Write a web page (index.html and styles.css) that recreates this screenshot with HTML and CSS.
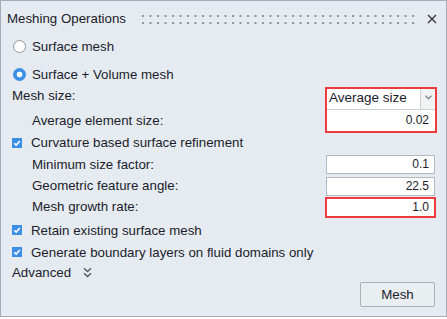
FILE: index.html
```html
<!DOCTYPE html>
<html lang="en">
<head>
  <meta charset="UTF-8" />
  <title>Meshing Operations</title>
  <link rel="stylesheet" href="styles.css">
</head>
<body>

  <div class="panel">
    <div class="head">
      <span class="title">Meshing Operations</span>
      <svg class="grip" height="9">
        <defs>
          <pattern id="dots" width="7.5" height="7" patternUnits="userSpaceOnUse">
            <rect x="0" y="0" width="2" height="2" fill="#8e9399" />
          </pattern>
        </defs>
        <rect x="0" y="0" width="100%" height="9" fill="url(#dots)" />
      </svg>
      <svg class="close" width="10" height="10" viewBox="0 0 10 10">
        <path d="M1 1 L9 9 M9 1 L1 9" stroke="#333" stroke-width="1.3" fill="none" />
      </svg>
    </div>

    <div class="radios">
      <label class="row"><span class="radio"></span>Surface mesh</label>
      <label class="row"><span class="radio on"></span>Surface + Volume mesh</label>
    </div>

    <div class="form">
      <span class="lbl top">Mesh size:</span>
      <div class="hl">
        <div class="select">
          <span>Average size</span>
          <span class="arrow">
            <svg width="7" height="5" viewBox="0 0 7 5"><path d="M0.5 0.8 L3.5 3.8 L6.5 0.8" stroke="#8a8a8a" stroke-width="1.4" fill="none" /></svg>
          </span>
        </div>
        <div class="value">0.02</div>
      </div>
      <span class="lbl sub">Average element size:</span>

      <div class="check full">
        <span class="box"><svg width="10" height="10" viewBox="0 0 10 10"><path d="M2.3 5.2 L4.2 7.1 L7.8 3" stroke="#fff" stroke-width="1.6" fill="none" /></svg></span>
        Curvature based surface refinement
      </div>

      <span class="lbl sub">Minimum size factor:</span>
      <div class="field">0.1</div>
      <span class="lbl sub">Geometric feature angle:</span>
      <div class="field">22.5</div>
      <span class="lbl sub">Mesh growth rate:</span>
      <div class="field marked">1.0</div>
    </div>

    <div class="check">
      <span class="box"><svg width="10" height="10" viewBox="0 0 10 10"><path d="M2.3 5.2 L4.2 7.1 L7.8 3" stroke="#fff" stroke-width="1.6" fill="none" /></svg></span>
      Retain existing surface mesh
    </div>
    <div class="check">
      <span class="box"><svg width="10" height="10" viewBox="0 0 10 10"><path d="M2.3 5.2 L4.2 7.1 L7.8 3" stroke="#fff" stroke-width="1.6" fill="none" /></svg></span>
      Generate boundary layers on fluid domains only
    </div>

    <div class="advanced">
      Advanced
      <svg width="9" height="11" viewBox="0 0 9 11">
        <path d="M1 1.2 L4.5 4.5 L8 1.2 M1 6.2 L4.5 9.5 L8 6.2" stroke="#555" stroke-width="1.3" fill="none" />
      </svg>
    </div>

    <div class="actions">
      <button class="btn">Mesh</button>
    </div>
  </div>

</body>
</html>
```

FILE: styles.css
```css
body {
  margin: 0;
  background: #fff;
  font-family: "Liberation Sans", Arial, sans-serif;
  font-size: 13.3px;
  color: #1c1c2c;
}
.panel {
  width: 447px;
  height: 317px;
  box-sizing: border-box;
  border: 1px solid #a5acb3;
  background: #e5ebf0;
  padding: 0 11px 0 11px;
}
.head {
  height: 36px;
  display: flex;
  align-items: center;
  margin-left: -5px;
  margin-right: -2px;
}
.title {
  line-height: 16px;
}
.grip {
  flex: 1;
  margin: 0 9px 0 16px;
}
.close {
  flex: none;
}
.radios {
  display: flex;
  flex-direction: column;
  gap: 10px;
}
.row {
  height: 18px;
  display: flex;
  align-items: center;
  gap: 6px;
  margin-left: 1px;
}
.radio {
  width: 13px;
  height: 13px;
  box-sizing: border-box;
  border-radius: 50%;
  border: 1px solid #8f959b;
  background: #fff;
}
.radio.on {
  border: none;
  background: radial-gradient(circle, #fff 2.6px, #3b8fe6 3.2px);
}
.form {
  margin-top: 6px;
  display: grid;
  grid-template-columns: 1fr 109px;
  grid-template-rows: 21px 21px 23px 21px 22px 20px;
  align-items: center;
}
.lbl {
  line-height: 16px;
}
.lbl.top {
  align-self: start;
  margin-top: -1px;
}
.sub {
  padding-left: 20px;
}
.hl {
  grid-row: 1 / span 2;
  grid-column: 2;
  align-self: stretch;
  margin-left: 1px;
  outline: 2px solid #ee3b40;
  background: #fff;
  display: flex;
  flex-direction: column;
}
.select {
  height: 21px;
  box-sizing: border-box;
  display: flex;
  border-bottom: 1px solid #cdd1d5;
  font-size: 13.5px;
  line-height: 16px;
}
.select span:first-child {
  flex: 1;
  padding-left: 2px;
  padding-top: 1px;
}
.arrow {
  width: 15px;
  border-left: 1px solid #cdd1d5;
  background: #f1f2f3;
  display: flex;
  justify-content: center;
  padding-top: 6px;
  box-sizing: border-box;
}
.value {
  flex: 1;
  text-align: right;
  font-size: 12px;
  line-height: 20px;
  padding-right: 6px;
}
.field {
  height: 19px;
  box-sizing: border-box;
  border: 1px solid #b4b9be;
  background: #fff;
  text-align: right;
  font-size: 12px;
  line-height: 17px;
  padding-right: 5px;
}
.field.marked {
  outline: 2px solid #ee3b40;
  outline-offset: -1px;
}
.check {
  height: 22px;
  display: flex;
  align-items: center;
  gap: 9px;
}
.form .check {
  height: auto;
}
.full {
  grid-column: 1 / span 2;
}
.form + .check {
  margin-top: 2px;
}
.box {
  width: 10px;
  height: 10px;
  background: #3b8fe6;
  display: flex;
}
.advanced {
  height: 19px;
  display: flex;
  align-items: center;
  gap: 12px;
}
.actions {
  display: flex;
  justify-content: flex-end;
}
.btn {
  width: 75px;
  height: 25px;
  border: 1px solid #abb1b7;
  border-radius: 2px;
  background: #e9eef1;
  font-family: inherit;
  font-size: 13.3px;
  color: #1c1c2c;
  padding: 0;
}
```
